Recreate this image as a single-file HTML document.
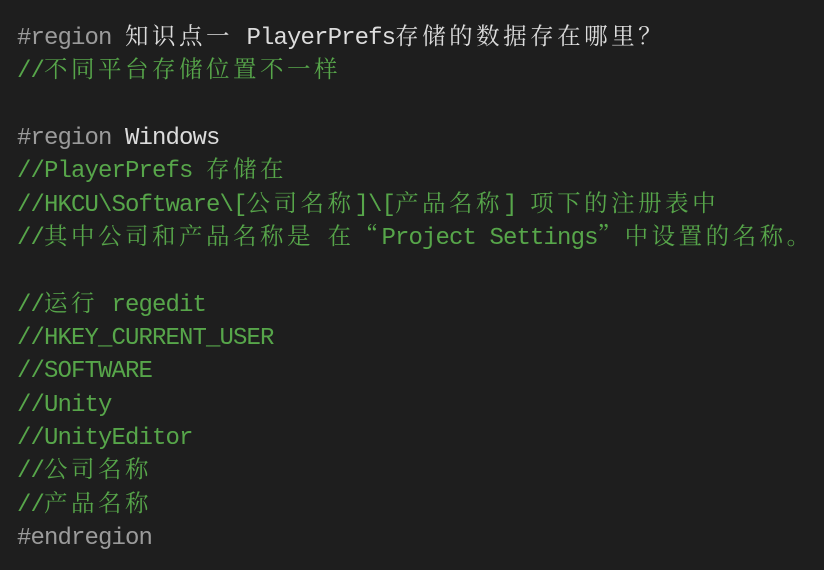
<!DOCTYPE html>
<html><head><meta charset="utf-8"><style>
html,body{margin:0;padding:0;background:#1e1e1e;width:824px;height:570px;overflow:hidden}
.code{position:absolute;left:17px;top:22px;font-family:"Liberation Mono",monospace;font-size:24px;letter-spacing:-0.9px;color:#dcdcdc}
.code div{height:33.35px;line-height:33.35px;white-space:pre;overflow:hidden}
.c{font-family:"Noto Serif CJK SC","Noto Sans CJK SC",serif;letter-spacing:3.5px;font-size:23.5px;line-height:1;vertical-align:baseline}
.g{color:#57a64a}.p{color:#9b9b9b}
</style></head><body><div class="code"><div><span class="p">#region</span> <span class="c">知识点一</span> PlayerPrefs<span class="c">存储的数据存在哪里？</span></div><div class="g">//<span class="c">不同平台存储位置不一样</span></div><div></div><div><span class="p">#region</span> Windows</div><div class="g">//PlayerPrefs <span class="c">存储在</span></div><div class="g">//HKCU\Software\[<span class="c">公司名称</span>]\[<span class="c">产品名称</span>] <span class="c">项下的注册表中</span></div><div class="g">//<span class="c">其中公司和产品名称是</span> <span class="c">在“</span>Project Settings<span class="c">”中设置的名称。</span></div><div></div><div class="g">//<span class="c">运行</span> regedit</div><div class="g">//HKEY_CURRENT_USER</div><div class="g">//SOFTWARE</div><div class="g">//Unity</div><div class="g">//UnityEditor</div><div class="g">//<span class="c">公司名称</span></div><div class="g">//<span class="c">产品名称</span></div><div class="p">#endregion</div></div></body></html>
